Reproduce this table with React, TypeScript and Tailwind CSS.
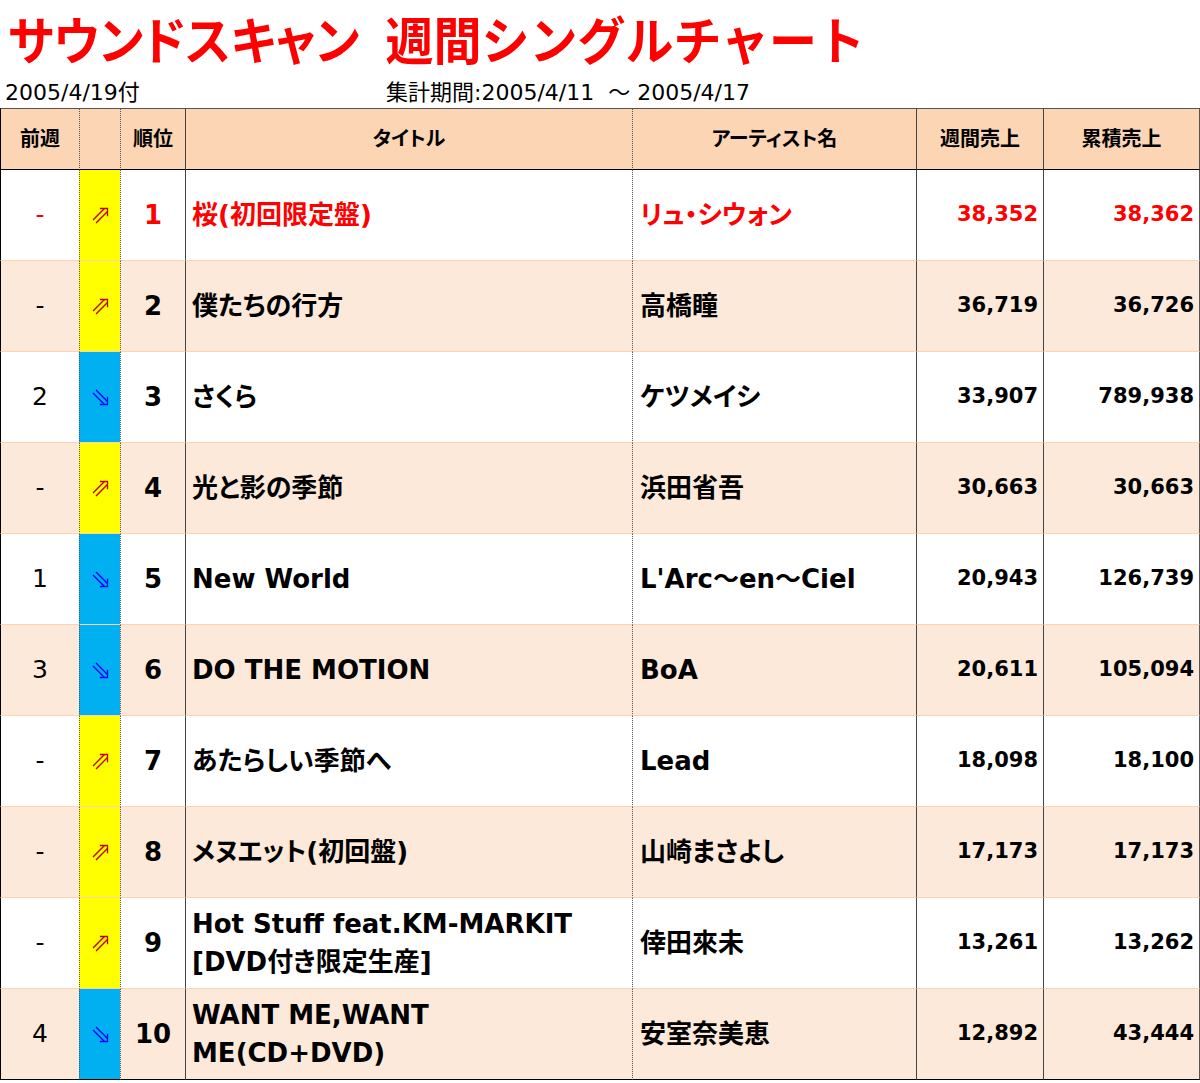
import React from "react";

type Row = {
  prev: string;
  up: boolean;
  rank: string;
  title: React.ReactNode;
  artist: string;
  week: string;
  total: string;
  red?: boolean;
};

const rows: Row[] = [
  { prev: "-", up: true, rank: "1", title: "桜(初回限定盤)", artist: "リュ・シウォン", week: "38,352", total: "38,362", red: true },
  { prev: "-", up: true, rank: "2", title: "僕たちの行方", artist: "高橋瞳", week: "36,719", total: "36,726" },
  { prev: "2", up: false, rank: "3", title: "さくら", artist: "ケツメイシ", week: "33,907", total: "789,938" },
  { prev: "-", up: true, rank: "4", title: "光と影の季節", artist: "浜田省吾", week: "30,663", total: "30,663" },
  { prev: "1", up: false, rank: "5", title: "New World", artist: "L'Arc～en～Ciel", week: "20,943", total: "126,739" },
  { prev: "3", up: false, rank: "6", title: "DO THE MOTION", artist: "BoA", week: "20,611", total: "105,094" },
  { prev: "-", up: true, rank: "7", title: "あたらしい季節へ", artist: "Lead", week: "18,098", total: "18,100" },
  { prev: "-", up: true, rank: "8", title: "メヌエット(初回盤)", artist: "山崎まさよし", week: "17,173", total: "17,173" },
  {
    prev: "-",
    up: true,
    rank: "9",
    title: (
      <>
        Hot Stuff feat.KM-MARKIT
        <br />
        [DVD付き限定生産]
      </>
    ),
    artist: "倖田來未",
    week: "13,261",
    total: "13,262",
  },
  {
    prev: "4",
    up: false,
    rank: "10",
    title: (
      <>
        WANT ME,WANT
        <br />
        ME(CD+DVD)
      </>
    ),
    artist: "安室奈美恵",
    week: "12,892",
    total: "43,444",
  },
];

const font = { fontFamily: '"DejaVu Sans", "Noto Sans CJK JP", sans-serif' };

function Arrow({ up }: { up: boolean }) {
  const c = up ? "#c00000" : "#0000ff";
  return (
    <svg width="17" height="17" viewBox="0 0 17 17" className="block">
      <g
        fill="none"
        stroke={c}
        strokeWidth="1.3"
        strokeLinecap="square"
        transform={up ? undefined : "translate(0 17) scale(1 -1)"}
      >
        <path d="M8.5 1.5 H15.5 V8.5" />
        <path d="M1.5 12.5 L12 2" />
        <path d="M4.5 15.5 L15 5" />
      </g>
    </svg>
  );
}

export default function App() {
  return (
    <div className="w-[1200px] h-[1083px] bg-white overflow-hidden text-black" style={font}>
      <div className="h-[78px] pl-[8px] pt-[3px]">
        <div
          className="text-[#ff0000] font-bold text-[48px] leading-[70px] whitespace-nowrap flex items-center scale-y-[1.06] origin-center"
          style={{ fontFamily: '"Noto Sans CJK JP", sans-serif' }}
        >
          <span className="[font-feature-settings:'palt']">サウンドスキャン</span>
          <span className="inline-block w-[26px]"></span>
          <span>週間シングルチャート</span>
        </div>
      </div>
      <div className="h-[30px] flex items-center text-[22px] leading-none whitespace-nowrap">
        <div className="w-[386px] pl-[5px]">2005/4/19付</div>
        <div>集計期間:2005/4/11&nbsp;&nbsp;～ 2005/4/17</div>
      </div>
      <div className="grid grid-cols-[79px_41px_65px_447px_284px_127px_157px] w-[1200px] [font-feature-settings:'palt']">
        {/* header */}
        <div className="h-[62px] bg-[#fcd5b4] border-l border-t border-b border-t-[#555] border-l-black border-b-black flex items-center justify-center font-bold text-[20px]">
          前週
        </div>
        <div
          className="h-[62px] bg-[#fcd5b4] border-l border-t border-b border-l-[#555] border-t-[#555] border-b-black"
          style={{ borderLeftStyle: "dotted" }}
        ></div>
        <div
          className="h-[62px] bg-[#fcd5b4] border-l border-t border-b border-l-[#555] border-t-[#555] border-b-black flex items-center justify-center font-bold text-[20px]"
          style={{ borderLeftStyle: "dotted" }}
        >
          順位
        </div>
        <div className="h-[62px] bg-[#fcd5b4] border-l border-t border-b border-l-[#444] border-t-[#555] border-b-black flex items-center justify-center font-bold text-[20px]">
          タイトル
        </div>
        <div
          className="h-[62px] bg-[#fcd5b4] border-l border-t border-b border-l-[#555] border-t-[#555] border-b-black flex items-center justify-center font-bold text-[20px]"
          style={{ borderLeftStyle: "dotted" }}
        >
          アーティスト名
        </div>
        <div className="h-[62px] bg-[#fcd5b4] border-l border-t border-b border-l-[#444] border-t-[#555] border-b-black flex items-center justify-center font-bold text-[20px]">
          週間売上
        </div>
        <div className="h-[62px] bg-[#fcd5b4] border-l border-r border-t border-b border-l-[#444] border-r-[#555] border-t-[#555] border-b-black flex items-center justify-center font-bold text-[20px]">
          累積売上
        </div>

        {rows.map((r, i) => {
          const last = i === rows.length - 1;
          const bg = i % 2 === 0 ? "bg-white" : "bg-[#fde9d9]";
          const bb = last ? "border-b border-b-black" : "border-b border-b-[#fbd4b4]";
          const color = r.red ? "text-[#ff0000]" : "text-black";
          return (
            <React.Fragment key={i}>
              <div className={`h-[91px] ${bg} ${bb} border-l border-l-black flex items-center justify-center text-[25px] ${color}`}>
                {r.prev}
              </div>
              <div
                className={`h-[91px] ${r.up ? "bg-[#ffff00]" : "bg-[#00b0f0]"} ${bb} border-l border-l-[#555] flex items-center justify-center`}
                style={{ borderLeftStyle: "dotted" }}
              >
                <Arrow up={r.up} />
              </div>
              <div
                className={`h-[91px] ${bg} ${bb} border-l border-l-[#555] flex items-center justify-center font-bold text-[26px] ${color}`}
                style={{ borderLeftStyle: "dotted" }}
              >
                {r.rank}
              </div>
              <div className={`h-[91px] ${bg} ${bb} border-l border-l-[#444] flex items-center pl-[6px] font-bold text-[26px] leading-[38px] ${color}`}>
                <div>{r.title}</div>
              </div>
              <div
                className={`h-[91px] ${bg} ${bb} border-l border-l-[#555] flex items-center pl-[7px] font-bold text-[26px] ${color}`}
                style={{ borderLeftStyle: "dotted" }}
              >
                {r.artist}
              </div>
              <div className={`h-[91px] ${bg} ${bb} border-l border-l-[#444] flex items-center justify-end pr-[5px] font-bold text-[21px] ${color}`}>
                {r.week}
              </div>
              <div className={`h-[91px] ${bg} ${bb} border-l border-r border-l-[#444] border-r-[#555] flex items-center justify-end pr-[5px] font-bold text-[21px] ${color}`}>
                {r.total}
              </div>
            </React.Fragment>
          );
        })}
      </div>
    </div>
  );
}
